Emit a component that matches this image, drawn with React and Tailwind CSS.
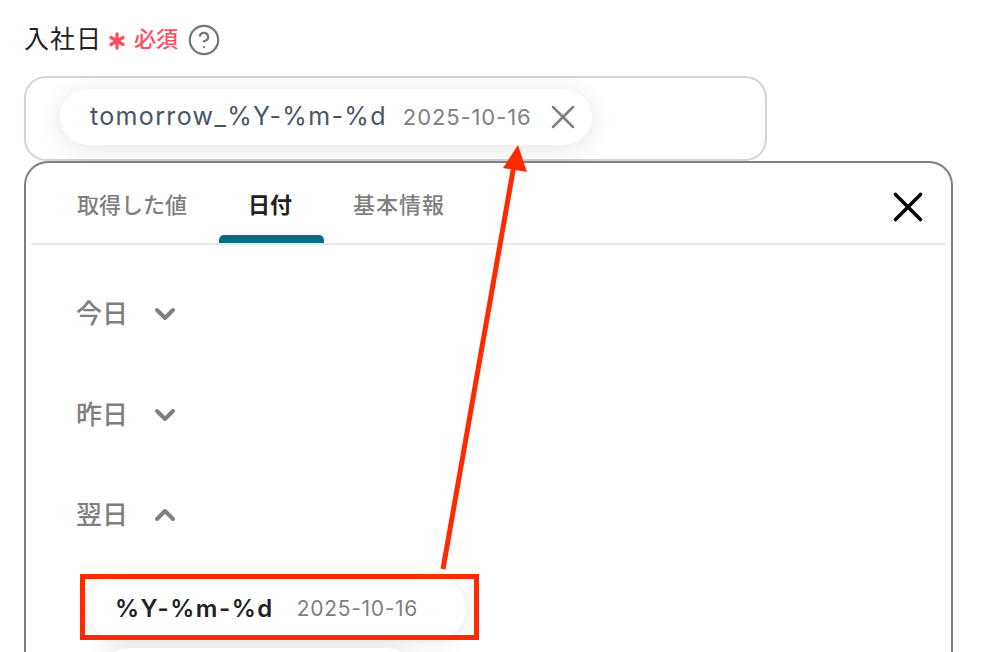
import { Asterisk, ChevronDown, ChevronUp, X, CircleHelp } from 'lucide-react'

const font = "font-['Inter','Noto_Sans_CJK_JP',sans-serif]"

const GroupRow = ({ label, open, className }) => (
  <div className={`flex items-center h-[32px] ${className}`}>
    <span className="text-[26px] leading-[32px] font-medium text-[#7f7f7f] w-[73px]">{label}</span>
    {open ? (
      <ChevronUp className="w-[32px] h-[32px] shrink-0 text-[#7f7f7f]" strokeWidth={3} />
    ) : (
      <ChevronDown className="w-[32px] h-[32px] shrink-0 text-[#7f7f7f]" strokeWidth={3} />
    )}
  </div>
)

export default function App() {
  return (
    <div className={`${font} relative w-[994px] h-[652px] overflow-hidden bg-white pl-[24px] pt-[24px]`}>
      {/* Label */}
      <div className="flex items-center h-[30px]">
        <span className="text-[25px] leading-[30px] text-[#222] tracking-[1px]">入社日</span>
        <Asterisk className="w-[28px] h-[28px] shrink-0 text-[#ff4d62] ml-[1px] mt-[3px]" strokeWidth={2.8} />
        <span className="text-[22px] leading-[30px] font-medium text-[#ff4d62] ml-[3px]">必須</span>
        <CircleHelp className="w-[34px] h-[34px] shrink-0 text-[#777] ml-[9px] mt-[2px]" strokeWidth={1.6} />
      </div>

      {/* Selected value field */}
      <div className="w-[743px] h-[85px] mt-[22px] border-2 border-[#d0d5dd] rounded-[22px] pl-[34px] pt-[11px]">
        <div className="flex items-center w-[532px] h-[56px] rounded-full bg-white shadow-[0_4px_24px_rgba(0,0,0,0.10)] pl-[30px]">
          <span className="text-[25px] text-[#4b5563] tracking-[1.35px] whitespace-nowrap">tomorrow_%Y-%m-%d</span>
          <span className="text-[22px] text-[#7f7f7f] ml-[16px] tracking-[0.9px] whitespace-nowrap">2025-10-16</span>
          <X className="w-[40px] h-[40px] shrink-0 text-[#7f7f7f] ml-[11px]" strokeWidth={1.5} />
        </div>
      </div>

      {/* Picker panel */}
      <div className="w-[929px] h-[520px] border-2 border-b-0 border-[#808080] rounded-t-[24px] px-[5px] bg-white">
        <div className="relative flex items-center h-[82px] border-b-2 border-[#e5e7eb]">
          <div className="flex items-center h-full pt-[4px] pl-[46px] text-[22px] font-medium">
            <span className="text-[#7f7f7f] w-[171px]">取得した値</span>
            <span className="relative text-[#222] w-[105px] font-semibold">
              日付
            </span>
            <span className="text-[#7f7f7f] tracking-[1px]">基本情報</span>
          </div>
          <div className="absolute left-[188px] bottom-0 w-[105px] h-[8px] rounded-t-[5px] bg-[#0a6b85]" />
          <X className="absolute left-[852px] top-[19px] w-[50px] h-[50px] text-black" strokeWidth={1.7} />
        </div>

        <div className="pl-[45px] pt-[53px]">
          <GroupRow label="今日" />
          <GroupRow label="昨日" className="mt-[69px]" />
          <GroupRow label="翌日" open className="mt-[68px]" />
        </div>

        <div className="ml-[57px] mt-[47px] flex items-center w-[378px] h-[62px] rounded-full bg-white shadow-[0_2px_20px_rgba(0,0,0,0.10)] pl-[27px]">
          <span className="text-[24px] font-semibold text-[#222] tracking-[1.5px] whitespace-nowrap">%Y-%m-%d</span>
          <span className="text-[21px] text-[#7f7f7f] ml-[23px] tracking-[0.7px] whitespace-nowrap">2025-10-16</span>
        </div>
        <div className="ml-[69px] mt-[8px] w-[315px] h-[60px] rounded-full bg-white shadow-[0_2px_20px_rgba(0,0,0,0.10)]" />
      </div>

      {/* Annotation box */}
      <div className="absolute left-[80px] top-[574px] w-[399px] h-[66px] border-[5px] border-[#ff2a00]" />

      {/* Annotation arrow */}
      <svg className="absolute left-0 top-0 pointer-events-none" width="994" height="652" viewBox="0 0 994 652">
        <line x1="443" y1="569" x2="514" y2="165" stroke="#ff2a00" strokeWidth="5" />
        <polygon points="518,145 503,168 527,172" fill="#ff2a00" />
      </svg>
    </div>
  )
}
